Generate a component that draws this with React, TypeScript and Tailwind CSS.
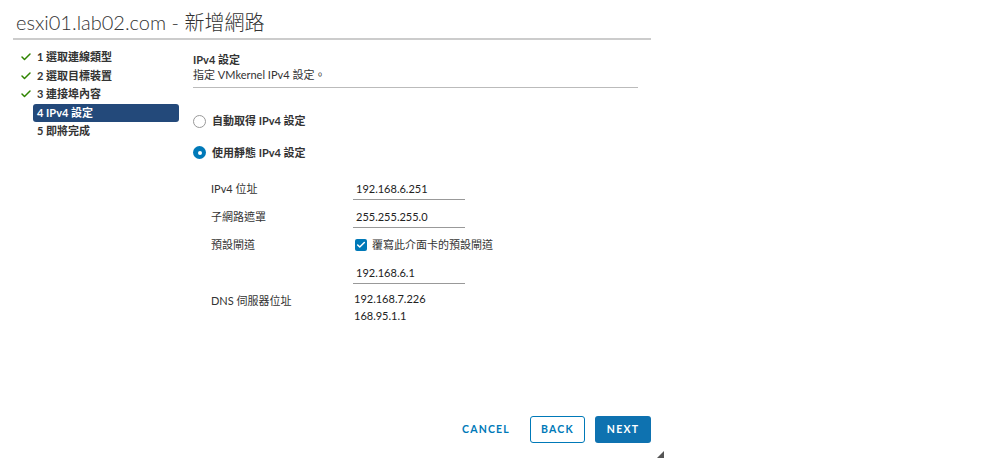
import { Check } from 'lucide-react';

const STEPS = [
  { n: 1, label: '選取連線類型', done: true },
  { n: 2, label: '選取目標裝置', done: true },
  { n: 3, label: '連接埠內容', done: true },
  { n: 4, label: 'IPv4 設定', done: false, active: true },
  { n: 5, label: '即將完成', done: false },
];

const FONT = { fontFamily: 'Lato, "Noto Sans CJK TC", sans-serif' };

function Field({ label, children }: { label: string; children: React.ReactNode }) {
  return (
    <div className="flex h-[28px] items-start">
      <div className="w-[142px] pt-[3px] text-[11px] text-[#333]">{label}</div>
      <div>{children}</div>
    </div>
  );
}

function Input({ value }: { value: string }) {
  return (
    <div className="w-[112px] border-b border-[#999] pl-[3px] pt-[4px] pb-[3px] text-[11px] leading-[14px] text-[#222]">
      {value}
    </div>
  );
}

export default function App() {
  return (
    <div className="relative h-[461px] w-[1000px] bg-white text-[#333]" style={FONT}>
      <div className="flex h-full w-[651px] flex-col pl-[13px]">
        {/* Header */}
        <div className="border-b-2 border-[#cccccc] pb-[5px] pl-[3px] pt-[11px]">
          <h1 className="text-[20px] font-light leading-[22px] text-[#333]">esxi01.lab02.com - 新增網路</h1>
        </div>

        <div className="flex flex-1">
          {/* Steps */}
          <div className="w-[180px] pt-[8px]">
            {STEPS.map(s => (
              <div key={s.n} className="flex h-[18.5px] items-center">
                <div className="flex w-[20px] justify-center pl-[6px]">
                  {s.done && <Check size={12} strokeWidth={3} className="text-[#2f8400]" />}
                </div>
                <div
                  className={
                    s.active
                      ? 'flex h-[18px] w-[146px] items-center rounded-[3px] bg-[#23497a] pl-[4px] text-[11px] font-bold text-white'
                      : 'pl-[4px] text-[11px] font-bold text-[#333]'
                  }
                >
                  {s.n} {s.label}
                </div>
              </div>
            ))}
          </div>

          {/* Content */}
          <div className="flex flex-1 flex-col pt-[12px]">
            <div className="mr-[13px] border-b border-[#bbb] pb-[4px]">
              <p className="text-[11px] font-bold leading-[15px] text-[#333]">IPv4 設定</p>
              <p className="text-[11px] leading-[16px] text-[#333]">指定 VMkernel IPv4 設定。</p>
            </div>

            <div className="mt-[25px] flex flex-col gap-[15px]">
              <label className="flex items-center gap-[6px]">
                <span className="h-[13px] w-[13px] rounded-full border border-[#999] bg-white" />
                <span className="text-[11px] font-bold">自動取得 IPv4 設定</span>
              </label>
              <label className="flex items-center gap-[6px]">
                <span className="flex h-[13px] w-[13px] items-center justify-center rounded-full bg-[#0079b8]">
                  <span className="h-[4px] w-[4px] rounded-full bg-white" />
                </span>
                <span className="text-[11px] font-bold">使用靜態 IPv4 設定</span>
              </label>
            </div>

            <div className="mt-[17px] pl-[18px]">
              <Field label="IPv4 位址">
                <Input value="192.168.6.251" />
              </Field>
              <Field label="子網路遮罩">
                <Input value="255.255.255.0" />
              </Field>
              <Field label="預設閘道">
                <div className="ml-[2px] flex items-center gap-[5px] pt-[3px]">
                  <span className="flex h-[12px] w-[12px] items-center justify-center rounded-[2px] bg-[#0079b8]">
                    <Check size={10} strokeWidth={3.5} className="text-white" />
                  </span>
                  <span className="text-[11px]">覆寫此介面卡的預設閘道</span>
                </div>
              </Field>
              <Field label="">
                <Input value="192.168.6.1" />
              </Field>
              <div className="flex items-start pt-[2px]">
                <div className="w-[142px] pt-[1px] text-[11px]">DNS 伺服器位址</div>
                <div className="ml-[1px] mt-[-2px] text-[11px] leading-[17px] text-[#222]">
                  <div>192.168.7.226</div>
                  <div>168.95.1.1</div>
                </div>
              </div>
            </div>

            <div className="mt-auto flex items-center justify-end gap-[10px] pb-[18px]">
              <button className="h-[27px] px-[10px] text-[10.5px] font-bold tracking-[1.2px] text-[#0079b8]">
                CANCEL
              </button>
              <button className="h-[27px] w-[55px] rounded-[3px] border border-[#0079b8] bg-white text-[10.5px] font-bold tracking-[1.2px] text-[#0079b8]">
                BACK
              </button>
              <button className="h-[27px] w-[56px] rounded-[3px] bg-[#0e72b0] text-[10.5px] font-bold tracking-[1.2px] text-white">
                NEXT
              </button>
            </div>
          </div>
        </div>
      </div>

      {/* resize grip */}
      <svg className="absolute left-[657px] top-[451px]" width="7" height="7" viewBox="0 0 7 7">
        <path d="M7 0 L7 7 L0 7 Z" fill="#555" />
      </svg>
    </div>
  );
}
